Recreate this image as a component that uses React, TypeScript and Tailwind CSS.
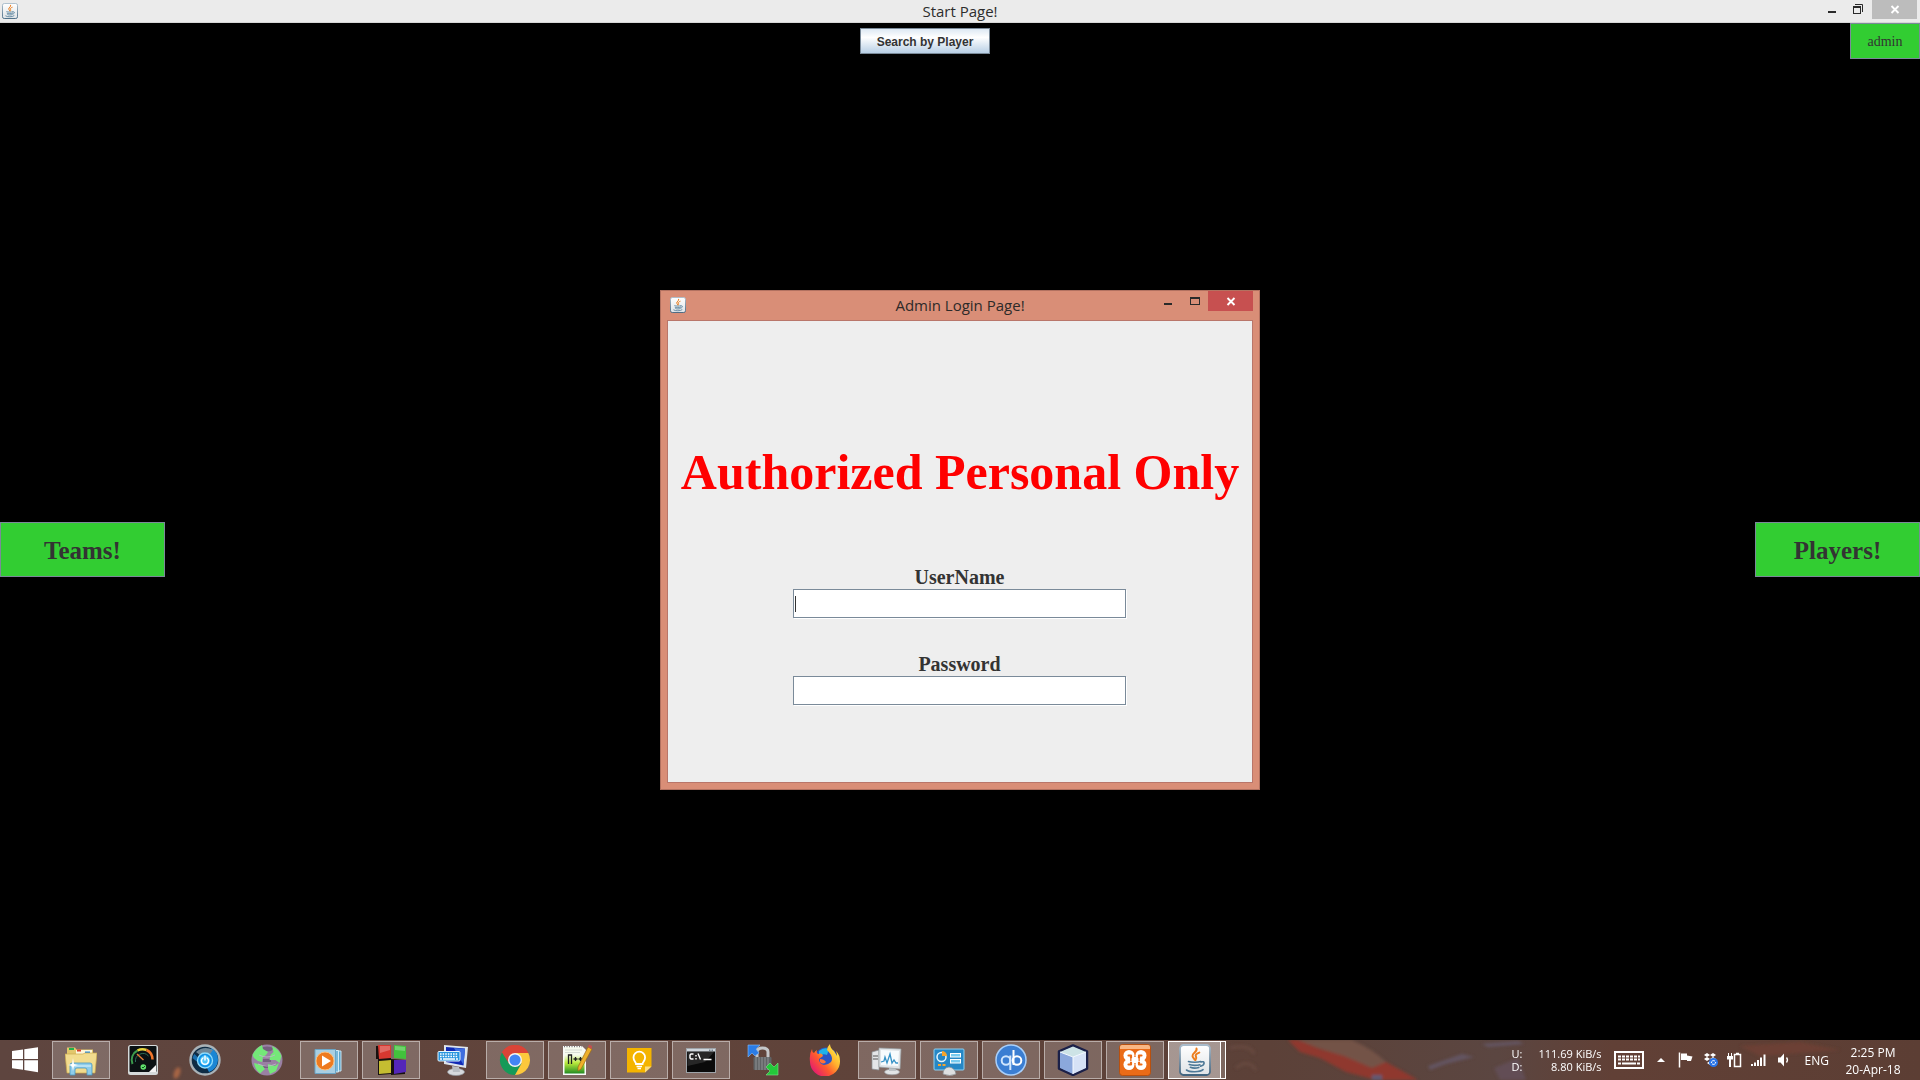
import React from "react";

const UI = "font-['Open_Sans','Noto_Sans',sans-serif]";
const SERIF = "font-['Liberation_Serif',serif]";

function JavaIcon({ className }: { className: string }) {
  return (
    <svg viewBox="0 0 32 32" className={className} aria-hidden="true">
      <defs>
        <linearGradient id="javaBg" x1="0" y1="0" x2="0" y2="1">
          <stop offset="0" stopColor="#ffffff" />
          <stop offset="1" stopColor="#dfe3e6" />
        </linearGradient>
        <linearGradient id="javaEdge" x1="0" y1="0" x2="0" y2="1">
          <stop offset="0" stopColor="#a9bccb" />
          <stop offset="1" stopColor="#40647f" />
        </linearGradient>
      </defs>
      <rect x="1" y="1" width="30" height="30" rx="3.5" fill="url(#javaBg)" stroke="url(#javaEdge)" strokeWidth="1.8" />
      <path d="M17.5 4.500c1.200 3.200-4.600 4.400-4 7.600.2 1.400 1.600 2.400 2.300 3.700M20.300 8.600c-2.900 1-4.400 2.300-3.300 4.200.7 1.200.6 2-.5 3.200" fill="none" stroke="#ec7d1d" strokeWidth="2" strokeLinecap="round" />
      <path d="M9.500 17.500c2.500 1 9.500 1 12.300 0M22 18c4-1.500 4.400 3-.4 4.300M10.300 20.600c2.500 1 8 1 10.600.1M11.400 23.300c2.500 1 6 .9 8.400.1M7.500 26c3 2.300 13.500 2.300 16.500-.4" fill="none" stroke="#4d7896" strokeWidth="1.600" strokeLinecap="round" />
    </svg>
  );
}

function Minimize({ y }: { y: number }) {
  return (
    <svg width="27" height="20" aria-hidden="true">
      <rect x="10" y={y} width="8" height="2" fill="#2a2a2a" />
    </svg>
  );
}

function CloseGlyph({ y }: { y: number }) {
  return (
    <svg width="45" height="20" aria-hidden="true">
      <path d={`M19.500 ${y}l7 7M26.500 ${y}l-7 7`} stroke="#fff" strokeWidth="1.900" />
    </svg>
  );
}

const ICON = "h-8 w-8 shrink-0";

function Explorer() {
  return (
    <svg viewBox="0 0 32 32" className={ICON}>
      <path d="M2 3.500h8l1.500 2H28v23H2z" fill="#e2c76c" />
      <rect x="4" y="4" width="5" height="2" fill="#20b14a" />
      <rect x="11" y="6" width="16" height="8" fill="#fdf6d8" />
      <rect x="12" y="5.500" width="4" height="2" fill="#d8402a" />
      <rect x="20" y="7.500" width="5" height="2" fill="#2b8ee0" />
      <path d="M0 10h18l2-1h12l-2 20H2z" fill="#f2dc8e" stroke="#cbaa4e" strokeWidth=".7" />
      <path d="M5 31V21q0-2 2-2h18q2 0 2 2v10h-5v-5q0-2-2-2h-8q-2 0-2 2v5z" fill="#8fcdea" stroke="#4a97c2" strokeWidth=".8" />
      <path d="M6 22h20" stroke="#dff4fd" />
      <path d="M8 14l1 6 4 1-4 1-1 5-1-5-4-1 4-1z" fill="#fff" />
    </svg>
  );
}

function Gauge() {
  return (
    <svg viewBox="0 0 32 32" className={ICON}>
      <rect x="1" y="1" width="30" height="30" rx="2.500" fill="#d5dada" />
      <rect x="2.500" y="2" width="27" height="26" rx="1" fill="#0b1113" />
      <path d="M5.500 20a10.500 10.500 0 0 1 5-13.500" fill="none" stroke="#3c9b4c" strokeWidth="2" />
      <path d="M10.500 6.500a10.500 10.500 0 0 1 9-.5" fill="none" stroke="#e6d33c" strokeWidth="2.500" />
      <path d="M19.500 6a10.500 10.500 0 0 1 6 9.500" fill="none" stroke="#f0762b" strokeWidth="2.500" />
      <path d="M8.500 18a7.500 7.500 0 0 1 13-6" fill="none" stroke="#2d6e56" strokeWidth="1" />
      <path d="M10 10l6.500 6" stroke="#e47b35" strokeWidth="1.500" />
      <circle cx="16.300" cy="23" r="2.800" fill="#62dd6c" />
      <path d="M15 23l1 1 2-2" fill="none" stroke="#0b5a20" />
      <path d="M22 28l7-7v7z" fill="#f5f5f5" />
    </svg>
  );
}

function PowerDisc() {
  return (
    <svg viewBox="0 0 32 32" className={ICON}>
      <circle cx="16" cy="16" r="14.500" fill="#0f2c44" stroke="#a9b2b7" strokeWidth="2.400" />
      <path d="M22 4a13 13 0 0 1 7 12 13 13 0 0 1-9 12l-3-6a8 8 0 0 0 3-12z" fill="#1b86d4" />
      <path d="M7 8q8-7 17-2l-3 4q-6-3-10 1z" fill="#6f8797" />
      <path d="M3.500 14q1-3 2-4l5 5-1 4z" fill="#1a6fae" />
      <circle cx="16" cy="16.500" r="7.500" fill="#1191e5" stroke="#8fdcfb" strokeWidth="1.300" />
      <circle cx="16" cy="16.500" r="5" fill="#4fc6fa" />
      <path d="M14 14a3.500 3.500 0 1 0 4 0M16 12v4" fill="none" stroke="#fff" strokeWidth="1.500" strokeLinecap="round" />
    </svg>
  );
}

function Globe() {
  return (
    <svg viewBox="0 0 32 32" className={ICON}>
      <circle cx="16" cy="16" r="15.500" fill="#9a80a3" />
      <path d="M9 4q7-3 14 0l-3 3q-5 1-8-1zM12 15h8v3h-8zM12 21h8v3h-8z" fill="#75607f" />
      <path d="M1.500 11Q5 4 11 1l1 4 5 3-2 3-3 2-1 5-4-1-4-3zM21 2q7 3 9.500 10l-2 7-4-3-6 0 1-5 3-3zM3 19l8 2 3 4-5 4.500q-5-4-6-10.500zM17 20l7 2 4-3-3 8-6 3-2-5z" fill="#74e878" />
      <path d="M8 11q8 4 16 0M7 20q9 4 18 0" fill="none" stroke="#c3b4cb" strokeWidth=".8" />
    </svg>
  );
}

function MediaPlayer() {
  return (
    <svg viewBox="0 0 32 32" className={ICON}>
      <path d="M8 7h20v20H8z" fill="#5fa6cc" stroke="#c5e4f3" />
      <path d="M5 6.500h20.500v21.500H5z" fill="#7ab9da" stroke="#d2ecf8" />
      <path d="M2 5.500h20.500v24H2z" fill="#a8cfe3" stroke="#6aa5c6" />
      <circle cx="12" cy="17" r="9" fill="#ee7a1f" stroke="#fbc07f" />
      <path d="M9 11.500v11l9-5.500z" fill="#fff" />
    </svg>
  );
}

function Blocks() {
  return (
    <svg viewBox="0 0 32 32" className={ICON}>
      <path d="M1 2l15-1v14l14 1v14l-14 1v-1L3 31V15H1z" fill="#17110f" />
      <path d="M3 1h13v13L4 15z" fill="#d73830" />
      <path d="M19 1l12 1v13l-12-1z" fill="#42c23c" />
      <path d="M4 17l12-1v13L4 30z" fill="#c5bd31" />
      <path d="M19 16h12v12l-12 2z" fill="#5427b8" />
      <path d="M5 2h10v4L5 9zM20 2l10 1v4l-10-1z" fill="#fff" opacity=".25" />
    </svg>
  );
}

function OnScreenKeyboard() {
  return (
    <svg viewBox="0 0 32 32" className={ICON}>
      <ellipse cx="19" cy="28" rx="8.500" ry="3.500" fill="#d6d9dc" stroke="#8e9499" strokeWidth=".7" />
      <path d="M15 22l7 1 1 5h-7z" fill="#b8bdc2" />
      <path d="M7 1l24 2-2 21-22-4z" fill="#dde4ec" />
      <path d="M9 3l19 1.500-1.500 17L9 18z" fill="#1029b4" />
      <path d="M17 4l11 1-1.500 16z" fill="#3d6de0" />
      <rect x="1" y="7.500" width="22" height="9.500" rx="1" fill="#2694de" stroke="#e6f4fd" />
      <path d="M3 10h18M3 12.500h18" stroke="#fff" strokeWidth="1.400" strokeDasharray="1.600 1" />
      <path d="M3 15h2M6 15h12M19 15h2" stroke="#fff" strokeWidth="1.300" />
    </svg>
  );
}

function Chrome() {
  return (
    <svg viewBox="0 0 32 32" className={ICON}>
      <path d="M16 16L3 8.500A15 15 0 0 1 29 8.500z" fill="#db4437" />
      <path d="M16 16L3 8.500A15 15 0 0 0 16 31l6.500-11.500z" fill="#159a58" />
      <path d="M16 9h13.300A15 15 0 0 1 16 31l6.500-11.500z" fill="#fcc83c" />
      <path d="M3 8.500L10 19.500 16 9h13.300A15 15 0 0 0 3 8.500z" fill="#db4437" />
      <circle cx="16" cy="16" r="7" fill="#f4f4f4" />
      <circle cx="16" cy="16" r="5.600" fill="#4285f4" />
    </svg>
  );
}

function NotepadPlus() {
  return (
    <svg viewBox="0 0 32 32" className={ICON}>
      <defs>
        <linearGradient id="npGreen" x1="0" y1="0" x2="0" y2="1">
          <stop offset=".3" stopColor="#f7fbef" />
          <stop offset=".6" stopColor="#b9ea3b" />
          <stop offset="1" stopColor="#228b22" />
        </linearGradient>
      </defs>
      <path d="M2 2h19l4 4v25H2z" fill="#fafafa" />
      <path d="M3.500 3h17l3 4v22.500h-20z" fill="url(#npGreen)" />
      <path d="M3 2.500h18" stroke="#777" strokeDasharray="1 1.500" strokeWidth="1.500" />
      <path d="M4 6h17M4 8.500h15" stroke="#cfd5cf" strokeWidth=".8" />
      <path d="M7.500 20v-9h3v9M12.500 15h4M14.500 13v4M17.500 15h4M19.500 13v4" fill="none" stroke="#222" strokeWidth="1.300" />
      <path d="M27 3l4 2-11 20-3 2v-4z" fill="#eeb12a" stroke="#9a6b17" strokeWidth=".7" />
      <path d="M27 3l1-2.500L31 2v3z" fill="#c25050" />
    </svg>
  );
}

function Keep() {
  return (
    <svg viewBox="0 0 32 32" className={ICON}>
      <path d="M4 4h24.500v18.500l-6.500 6H4z" fill="#f4b400" />
      <path d="M22 28.500v-6h6.500z" fill="#fcde82" />
      <path d="M13 20c0-2-2.500-3-2.500-6.500a5.800 5.800 0 0 1 11.600 0c0 3.500-2.600 4.500-2.600 6.500z" fill="none" stroke="#fff" strokeWidth="1.800" />
      <path d="M13.500 22.500h5.500M14.500 24.500h3.500" stroke="#fff" strokeWidth="1.500" />
    </svg>
  );
}

function Cmd() {
  return (
    <svg viewBox="0 0 32 32" className={ICON}>
      <rect x="1.500" y="4.500" width="29" height="24" fill="#0a0a0a" stroke="#9ea3a8" />
      <path d="M2 5h28v2.500H2z" fill="#cfd6dc" />
      <path d="M24 6.200h1.500M26.500 6.200H28" stroke="#4c5b68" />
      <path d="M2.500 8H29l-9 10-17.500 4z" fill="#fff" opacity=".12" />
      <path d="M8.500 10H6l-1 1v3l1 1h2.500M11 11v1.500M11 14v1.500M13 9.500l2.500 6M18.500 15.500h8" fill="none" stroke="#fff" strokeWidth="1.400" />
    </svg>
  );
}

function SecureTransfer() {
  return (
    <svg viewBox="0 0 32 32" className={ICON}>
      <path d="M10 14V8q0-4 5.500-4T21 8v6" fill="none" stroke="#c4c7c9" strokeWidth="3" />
      <rect x="6.500" y="13" width="18" height="13" rx="1" fill="#606365" />
      <path d="M9 13v13M12 13v13M15 13v13M18 13v13M21 13v13" stroke="#8f9294" />
      <path d="M1 1h12l-4 4 3 4-4 3-3-3-4 4z" fill="#2a7ce6" stroke="#8cbcf5" strokeWidth=".6" />
      <path d="M31 31H19l4-4-4-4 4-4 4 4 4-4z" fill="#24c83a" stroke="#7de18a" strokeWidth=".6" />
    </svg>
  );
}

function Firefox() {
  return (
    <svg viewBox="0 0 32 32" className={ICON}>
      <defs>
        <linearGradient id="ffFlame" x1=".9" y1=".1" x2=".1" y2=".8">
          <stop offset="0" stopColor="#fff04a" />
          <stop offset=".35" stopColor="#ffb22e" />
          <stop offset=".65" stopColor="#ff5a2e" />
          <stop offset="1" stopColor="#e6206c" />
        </linearGradient>
      </defs>
      <circle cx="17" cy="15" r="11.500" fill="#2b55c4" />
      <path d="M10 7q5-4 10-2l-2 6q-4-2-8 1z" fill="#20b3e8" />
      <path d="M3 5q0 3 2 4 1-2 3-3-1 3 1 4 3-1 4 0l1 2-4 3q0 5 5 6 4 0 7-3 2-3 0-7-2-3-4-5 0-3 3-6 0 4 4 7l3 5q0-3-1-5 4 4 4 10a15 15 0 0 1-30 1Q0 10 3 5z" fill="url(#ffFlame)" />
      <path d="M11 15q4 0 6 3-3 3-6 0z" fill="#ff7139" />
    </svg>
  );
}

function Monitor() {
  return (
    <svg viewBox="0 0 32 32" className={ICON}>
      <path d="M1 8l7-2v20l-7-1z" fill="#e4e6e8" stroke="#8d9296" strokeWidth=".7" />
      <path d="M2 12h5M2 15h5" stroke="#555" />
      <ellipse cx="21" cy="28" rx="7.500" ry="2.800" fill="#e1e4e6" stroke="#9b9fa3" strokeWidth=".7" />
      <path d="M18 22h6l1 5h-7z" fill="#bcc2c6" />
      <path d="M8 4l22 1-1 20-21-2z" fill="#dfe3e6" stroke="#9aa0a5" strokeWidth=".7" />
      <path d="M10 6l18 1-1 15-17-1z" fill="#f7fbfd" />
      <path d="M10 18l3-1 1-4 2 6 3-9 2 9 2-3 2 3h2" fill="none" stroke="#3893c7" strokeWidth="1.300" />
    </svg>
  );
}

function ControlPanel() {
  return (
    <svg viewBox="0 0 32 32" className={ICON}>
      <rect x="1" y="5" width="30" height="21" rx="1" fill="#2687c5" stroke="#8fd0f0" />
      <circle cx="8.500" cy="13" r="4.500" fill="none" stroke="#e6f5fd" strokeWidth="1.500" />
      <path d="M9 12V7a5 5 0 0 1 5 5z" fill="#f5a42c" />
      <rect x="17.500" y="9.500" width="10" height="3.500" fill="#79cbf0" stroke="#fff" />
      <rect x="17.500" y="15.500" width="10" height="3.500" fill="#79cbf0" stroke="#fff" />
      <path d="M5 21h3M9.500 21h3" stroke="#f5a42c" strokeWidth="2" />
      <path d="M10 30q0-6 6-7 6 1 7 7-6 3-13 0z" fill="#dddfe0" stroke="#8c9296" strokeWidth=".7" />
    </svg>
  );
}

function QBittorrent() {
  return (
    <svg viewBox="0 0 32 32" className={ICON}>
      <circle cx="16" cy="16" r="15" fill="#3b7ed2" stroke="#a9d0fb" strokeWidth="1.500" />
      <circle cx="11" cy="16.500" r="4.300" fill="none" stroke="#cfe5fd" strokeWidth="2" />
      <path d="M15.300 11.500V26" stroke="#cfe5fd" strokeWidth="2" />
      <path d="M18.500 6v15" stroke="#fff" strokeWidth="2" />
      <circle cx="22" cy="16.500" r="4.300" fill="none" stroke="#fff" strokeWidth="2" />
    </svg>
  );
}

function Cube() {
  return (
    <svg viewBox="0 0 32 32" className={ICON}>
      <path d="M16 1.500l14 6v17L16 31 2 24.500v-17z" fill="#a9bfe4" stroke="#1b2048" strokeWidth="2.500" strokeLinejoin="round" />
      <path d="M16 2.500l13 5.500-13 5L3 8z" fill="#cde3e6" />
      <path d="M3 8l13 5v17L3 24z" fill="#8ba8dc" />
      <path d="M29 8l-13 5v17l13-6z" fill="#d6e2f6" />
      <path d="M3 8l13 5 13-5M16 13v17" fill="none" stroke="#f4f9ff" />
    </svg>
  );
}

function Xampp() {
  return (
    <svg viewBox="0 0 32 32" className={ICON}>
      <rect x=".5" y=".5" width="31" height="31" rx="3" fill="#ea6b17" stroke="#b8500e" />
      <path d="M1 3q0-2 2-2h26q2 0 2 2v2H1z" fill="#f9b784" />
      <g fill="#fff">
        <circle cx="10" cy="11.500" r="5.500" />
        <circle cx="22" cy="11.500" r="5.500" />
        <circle cx="10" cy="20.500" r="5.500" />
        <circle cx="22" cy="20.500" r="5.500" />
        <rect x="10" y="13" width="12" height="6" />
      </g>
      <path d="M9.500 11.500h2.500v2.500M9.500 20.500h2.500v-2M22.500 11.500H20v2.500M22.500 20.500H20v-2M12 16h8" fill="none" stroke="#ea6b17" strokeWidth="2.200" strokeLinecap="round" strokeLinejoin="round" />
      <path d="M12.500 16h7" stroke="#fff" strokeWidth="3" />
    </svg>
  );
}

const apps: { name: string; open: boolean; Icon: () => React.ReactElement }[] = [
  { name: "File Explorer", open: true, Icon: Explorer },
  { name: "Performance gauge", open: false, Icon: Gauge },
  { name: "Power tool", open: false, Icon: PowerDisc },
  { name: "Globe", open: false, Icon: Globe },
  { name: "Media Player", open: true, Icon: MediaPlayer },
  { name: "Blocks", open: true, Icon: Blocks },
  { name: "On-Screen Keyboard", open: false, Icon: OnScreenKeyboard },
  { name: "Chrome", open: true, Icon: Chrome },
  { name: "Notepad++", open: true, Icon: NotepadPlus },
  { name: "Keep", open: true, Icon: Keep },
  { name: "Command Prompt", open: true, Icon: Cmd },
  { name: "Secure transfer", open: false, Icon: SecureTransfer },
  { name: "Firefox", open: false, Icon: Firefox },
  { name: "System monitor", open: true, Icon: Monitor },
  { name: "Control Panel", open: true, Icon: ControlPanel },
  { name: "qBittorrent", open: true, Icon: QBittorrent },
  { name: "NetBeans", open: true, Icon: Cube },
  { name: "XAMPP", open: true, Icon: Xampp },
];

function Wallpaper() {
  return (
    <svg viewBox="0 0 1920 40" preserveAspectRatio="xMinYMid slice" className="absolute inset-0 h-full w-full" aria-hidden="true">
      <defs>
        <linearGradient id="wall" x1="0" x2="1" y1="0" y2="0">
          <stop offset="0" stopColor="#5e453f" />
          <stop offset=".3" stopColor="#61443b" />
          <stop offset=".66" stopColor="#5c4138" />
          <stop offset=".78" stopColor="#5b4641" />
          <stop offset=".84" stopColor="#614036" />
          <stop offset="1" stopColor="#5c3e34" />
        </linearGradient>
        <filter id="soft" x="-20%" y="-50%" width="140%" height="200%">
          <feGaussianBlur stdDeviation="1.800" />
        </filter>
      </defs>
      <rect width="1920" height="40" fill="url(#wall)" />
      <g filter="url(#soft)">
        <path d="M1296 0h56q22 10 34 22l-12 8-34-14z" fill="#735247" />
        <path d="M1288 0h10l22 9 24 7 28 12 14-6 18 10 14 8h-42l-30-8-26-14-20-6z" fill="#8f392d" />
        <path d="M1372 35h10v5h-10z" fill="#625a72" />
        <path d="M1428 26l34-12 12 3-28 7-16 6zM1482 4l36-3 6 3-36 3z" fill="#645562" />
        <path d="M1494 28l24-10 8 22h-26z" fill="#624e54" />
        <path d="M1230 8q20-4 24 6M1236 28q12-10 20 2" fill="none" stroke="#674a40" strokeWidth="3" />
        <ellipse cx="177" cy="33" rx="3" ry="6" fill="#a86544" transform="rotate(20 177 33)" />
        <path d="M1740 6l60-4 40 8-80 6z" fill="#6c4034" />
      </g>
    </svg>
  );
}

function KeyboardTray() {
  return (
    <svg width="30" height="20" aria-hidden="true">
      <rect x="1" y="2" width="28" height="16" fill="none" stroke="#fff" strokeWidth="2" />
      <path d="M4 6.500h22M4 9.500h22" stroke="#fff" strokeWidth="2" strokeDasharray="3 1" />
      <path d="M4 13.500h3M8 13.500h14M23 13.500h3" stroke="#fff" strokeWidth="2" />
    </svg>
  );
}

function Tray() {
  return (
    <div className="flex items-center">
      <table className="w-[90px] text-[11px] leading-[13px] text-white">
        <tbody>
          <tr>
            <th scope="row" className="p-0 text-left font-normal">U:</th>
            <td className="whitespace-nowrap p-0 text-right">111.69 KiB/s</td>
          </tr>
          <tr>
            <th scope="row" className="p-0 text-left font-normal">D:</th>
            <td className="whitespace-nowrap p-0 text-right">8.80 KiB/s</td>
          </tr>
        </tbody>
      </table>
      <button type="button" aria-label="Touch keyboard" className="ml-3">
        <KeyboardTray />
      </button>
      <button type="button" aria-label="Show hidden icons" className="ml-3">
        <svg width="10" height="20" aria-hidden="true">
          <path d="M1 12l4-4 4 4z" fill="#fff" />
        </svg>
      </button>
      <button type="button" aria-label="Action center" className="ml-3">
        <svg width="15" height="20" aria-hidden="true">
          <path d="M1.500 2.500v15" stroke="#fff" strokeWidth="1.500" />
          <path d="M3 3.500h6v2l5.500 1-1.500 4.500H9v-1H3z" fill="#fff" />
        </svg>
      </button>
      <button type="button" aria-label="Dropbox" className="ml-2.5">
        <svg width="16" height="20" aria-hidden="true">
          <path d="M4 3l3 2-3 2-3-2zM10 3l3 2-3 2-3-2zM4 7l3 2-3 2-3-2zM10 7l3 2-3 2-3-2zM7 11l3 1.500L7 15l-3-2z" fill="#fff" />
          <circle cx="10.500" cy="12.500" r="4.500" fill="#2a75e8" />
          <path d="M8.300 13a2.300 2.300 0 0 1 3.600-2M12.700 12a2.300 2.300 0 0 1-3.600 2" fill="none" stroke="#fff" />
        </svg>
      </button>
      <button type="button" aria-label="Battery" className="ml-2">
        <svg width="16" height="20" aria-hidden="true">
          <path d="M7.500 4.500h6v12h-6zM9 3.500h3" fill="none" stroke="#fff" strokeWidth="1.500" />
          <path d="M1.500 3v3M4.500 3v3" stroke="#fff" />
          <path d="M0 6h6v3.500H4V17H2V9.500H0z" fill="#fff" />
        </svg>
      </button>
      <button type="button" aria-label="Network" className="ml-2">
        <svg width="16" height="20" aria-hidden="true">
          <path d="M1 16v-2M4 16v-3.500M7 16v-6M10 16V7.500M13.500 16V4.500" stroke="#fff" strokeWidth="2" />
        </svg>
      </button>
      <button type="button" aria-label="Volume" className="ml-2.5">
        <svg width="14" height="20" aria-hidden="true">
          <path d="M1 7.500h2.500L7 3.500v13l-3.500-4H1z" fill="#fff" />
          <path d="M9.500 7.500q2 2.500 0 5" fill="none" stroke="#fff" strokeWidth="1.300" />
        </svg>
      </button>
      <button type="button" className="ml-3.5 pt-px text-xs text-white">ENG</button>
      <button type="button" className="mr-[7px] ml-1 w-20 pt-0.5 text-center text-xs leading-[17px] text-white">
        <span className="block">2:25 PM</span>
        <span className="block">20-Apr-18</span>
      </button>
    </div>
  );
}

function Taskbar() {
  return (
    <footer className={`relative h-10 overflow-hidden ${UI}`}>
      <Wallpaper />
      <div className="relative flex h-10 items-center justify-between">
        <div className="flex items-center gap-1">
          <button type="button" aria-label="Start" className="flex h-10 w-12 items-center justify-center pl-0.5">
            <svg width="26" height="26" viewBox="0 0 26 26" aria-hidden="true">
              <path d="M0 4l11-1.500V12H0zM12.300 2.300L26 .3V12H12.300zM0 13.200h11v9.600L0 21.300zM12.300 13.200H26v12L12.300 23z" fill="#fff" />
            </svg>
          </button>
          {apps.map(({ name, open, Icon }) => (
            <button
              key={name}
              type="button"
              aria-label={name}
              className={
                open
                  ? "flex h-[38px] w-[58px] items-center justify-center border border-white/45 bg-white/20"
                  : "flex h-[38px] w-[58px] items-center justify-center border border-transparent"
              }
            >
              <Icon />
            </button>
          ))}
          <div className="flex">
            <button type="button" aria-label="Java" className="flex h-[38px] w-[53px] items-center justify-center border border-white bg-white/45">
              <JavaIcon className="h-8 w-8" />
            </button>
            <div className="h-[38px] w-[5px] border-y border-r border-white bg-white/20" />
          </div>
        </div>
        <Tray />
      </div>
    </footer>
  );
}

function Field({ id, label, type, caret }: { id: string; label: string; type: string; caret?: boolean }) {
  return (
    <div className="w-[334px] max-w-full pr-px">
      <label htmlFor={id} className="block text-center text-[20px] leading-6 font-bold text-[#333333]">
        {label}
      </label>
      <div className="relative">
        <input
          id={id}
          type={type}
          className="block h-[29px] w-full border border-[#7a8a99] bg-white px-1 text-base shadow-[1px_1px_0_#ffffff] outline-none"
        />
        {caret && <span className="pointer-events-none absolute top-[7px] left-0.5 h-4 w-px bg-[#333333]" />}
      </div>
    </div>
  );
}

function LoginDialog() {
  return (
    <div className="pointer-events-none fixed inset-0 flex items-center justify-center">
      <section
        role="dialog"
        aria-label="Admin Login Page!"
        className="pointer-events-auto w-full max-w-[600px] border border-[#b27160] bg-[#d98e77] px-1.5 pb-1.5"
      >
        <header className={`grid h-[29px] grid-cols-[1fr_auto_1fr] ${UI}`}>
          <JavaIcon className="mt-1.5 ml-[3px] h-4 w-4" />
          <h2 className="pt-[3px] text-[15px] leading-[22px] text-[#2d2a29]">Admin Login Page!</h2>
          <div className="flex items-start justify-end">
            <button type="button" aria-label="Minimize">
              <Minimize y={12} />
            </button>
            <button type="button" aria-label="Maximize">
              <svg width="27" height="20" aria-hidden="true">
                <path d="M9 6h10v8H9z" fill="#2a2a2a" />
                <path d="M10 8h8v5h-8z" fill="#d98e77" />
              </svg>
            </button>
            <button type="button" aria-label="Close" className="bg-[#c75050]">
              <CloseGlyph y={7} />
            </button>
          </div>
        </header>
        <form className={`flex flex-col items-center border border-[#b9766a] bg-[#eeeeee] pt-[122px] pb-[77px] ${SERIF}`}>
          <h1 className="text-center text-[50px] leading-[58px] font-bold text-[#ff0000]">Authorized Personal Only</h1>
          <div className="h-16" />
          <Field id="username" label="UserName" type="text" caret />
          <div className="h-[34px]" />
          <Field id="password" label="Password" type="password" />
        </form>
      </section>
    </div>
  );
}

export default function App() {
  return (
    <div className="flex min-h-screen flex-col bg-black">
      <header className={`grid h-[23px] grid-cols-[1fr_auto_1fr] border-b border-[#d6d6d6] bg-[#ebebeb] ${UI}`}>
        <JavaIcon className="mt-[3px] ml-0.5 h-4 w-4" />
        <h1 className="text-[15px] leading-[22px] text-[#2d2d2d]">Start Page!</h1>
        <div className="flex items-start justify-end pr-[3px]">
          <button type="button" aria-label="Minimize">
            <Minimize y={11} />
          </button>
          <button type="button" aria-label="Restore">
            <svg width="27" height="20" aria-hidden="true">
              <path d="M10 4.500h7.500V12" fill="none" stroke="#2a2a2a" />
              <path d="M8 6h8v8H8z" fill="#2a2a2a" />
              <path d="M9 8h6v5H9z" fill="#ebebeb" />
            </svg>
          </button>
          <button type="button" aria-label="Close" className="h-[19px] overflow-hidden bg-[#bcbcbc]">
            <CloseGlyph y={6} />
          </button>
        </div>
      </header>
      <main className="flex flex-1 flex-col">
        <div className="flex items-start">
          <div className="flex flex-1 justify-center pt-[5px]">
            <button
              type="button"
              className="h-[26px] w-[130px] border border-[#7a8a99] bg-[linear-gradient(#dde8f3_0%,#ffffff_35%,#b8cfe5_100%)] pt-0.5 text-xs font-bold text-[#333333] font-['Liberation_Sans',sans-serif]"
            >
              Search by Player
            </button>
          </div>
          <button type="button" className={`h-9 w-[70px] border border-[#7a8a99] bg-[#32cd32] pt-0.5 text-sm text-[#333333] ${SERIF}`}>
            admin
          </button>
        </div>
        <div className={`flex flex-1 items-center justify-between text-[25px] font-bold text-[#333333] ${SERIF}`}>
          <button type="button" className="h-[55px] w-[165px] border border-[#7a8a99] bg-[#32cd32] pt-0.5">
            Teams!
          </button>
          <button type="button" className="h-[55px] w-[165px] border border-[#7a8a99] bg-[#32cd32] pt-0.5">
            Players!
          </button>
        </div>
      </main>
      <Taskbar />
      <LoginDialog />
    </div>
  );
}
